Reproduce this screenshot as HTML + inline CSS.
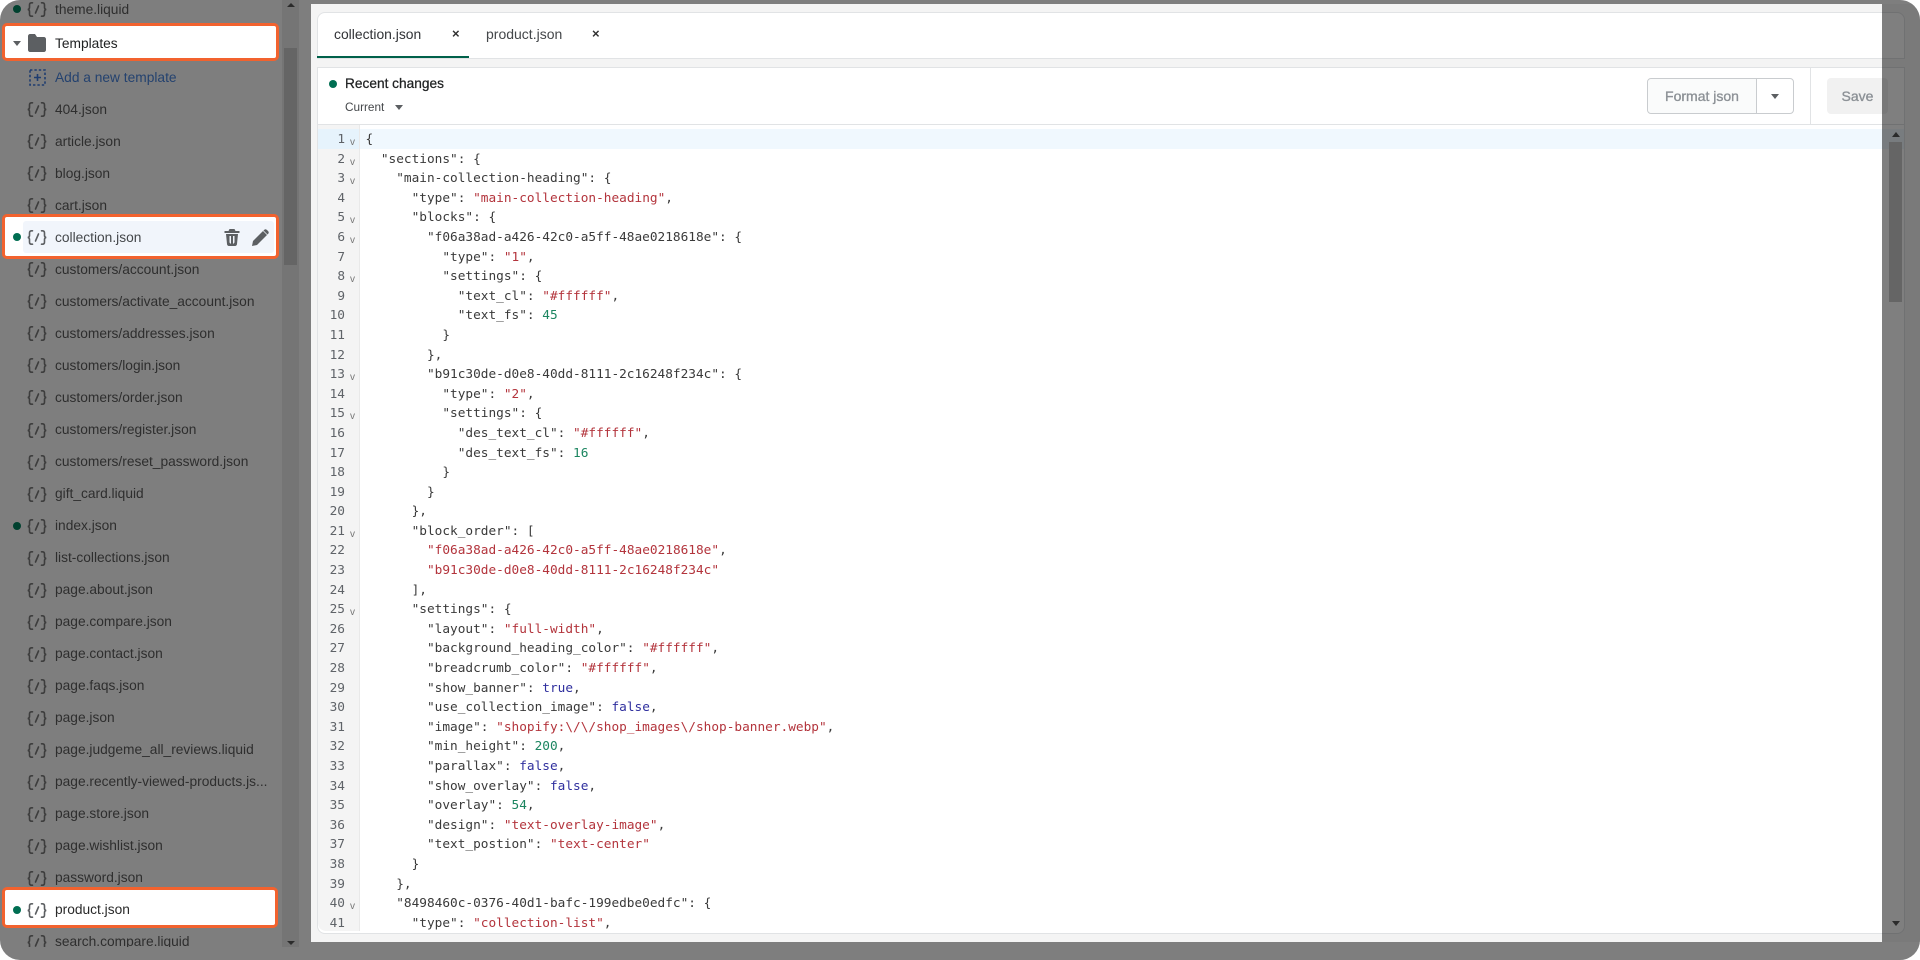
<!DOCTYPE html>
<html><head><meta charset="utf-8"><style>
html,body{margin:0;padding:0;background:#fff}
#w{position:relative;width:1920px;height:960px;overflow:hidden;border-radius:20px;background:#7e7e7e;font-family:"Liberation Sans",sans-serif}
#w div,#w pre,#w svg{position:absolute}
#side{left:0;top:0;width:282px;height:947px;overflow:hidden}
.r{left:55px;width:220px;height:32px;line-height:32px;font-size:13.75px;color:#2e2e2e;white-space:nowrap;margin-top:-15.5px}
.ic{left:27px;width:20px;height:15px;margin-top:-7.5px;fill:none;stroke:#3d3d3d;stroke-width:1.6;stroke-linecap:round}
.dot{left:13px;width:8px;height:8px;border-radius:50%;background:#00412f;margin-top:-4px}
.hl{left:2px;width:271px;background:#fff;border:3px solid #f2622e;border-radius:5px}
#panel{left:311px;top:4px;width:1609px;height:938px;background:#f4f4f4}
.card{background:#fff;border:1px solid #e1e3e5}
pre{margin:0;font-family:"DejaVu Sans Mono","Liberation Mono",monospace;font-size:12.77px;line-height:19.6px;color:#3a3a3a}
.s{color:#b3343c}.b{color:#2f2f9e}.n{color:#1c8560}
#dimr{left:1882px;top:4px;width:38px;height:938px;background:rgba(0,0,0,.5)}
</style></head><body><div id="w">

<div style="left:282px;top:0;width:17px;height:947px;background:#757575"></div>
<div style="left:284px;top:48px;width:13px;height:217px;background:#656565"></div>
<div style="left:287px;top:3px;width:0;height:0;border:4px solid transparent;border-bottom:4px solid #2b2b2b;border-top:0"></div>
<div style="left:287px;top:941px;width:0;height:0;border:4px solid transparent;border-top:4px solid #2b2b2b;border-bottom:0"></div>

<div id="side">
<div class="hl" style="top:23px;height:32px"></div>
<div class="hl" style="top:214px;height:39px"></div>
<div style="left:23px;top:221px;width:251px;height:32px;background:#f1f5fb;border-radius:3px"></div>
<div class="hl" style="top:887px;height:35px;width:270px"></div>

<div class="dot" style="top:9px"></div>
<svg class="ic" style="top:9px" viewBox="0 0 20 15"><path d="M5.5 .8H4.5C3 .8 2.5 1.6 2.5 3V5.5C2.5 6.5 1.8 7.3 .8 7.5 1.8 7.7 2.5 8.5 2.5 9.5V12C2.5 13.4 3 14.2 4.5 14.2H5.5M14.5 .8H15.5C17 .8 17.5 1.6 17.5 3V5.5C17.5 6.5 18.2 7.3 19.2 7.5 18.2 7.7 17.5 8.5 17.5 9.5V12C17.5 13.4 17 14.2 15.5 14.2H14.5M8.5 11L11.5 4"/></svg>
<div class="r" style="top:9px">theme.liquid</div>

<div style="left:13px;top:41px;width:0;height:0;border:4px solid transparent;border-top:5px solid #5c5f62;border-bottom:0"></div>
<svg style="left:28px;top:34px;width:18px;height:18px" viewBox="0 0 18 18"><path fill="#5c5f62" d="M0 2C0 1 1 0 2 0H7L9 3H16C17 3 18 4 18 5V16C18 17 17 18 16 18H2C1 18 0 17 0 16Z"/></svg>
<div class="r" style="top:43px;color:#202223;font-weight:400">Templates</div>

<svg style="left:29px;top:69px;width:17px;height:17px" viewBox="0 0 17 17"><rect x="1" y="1" width="15" height="15" fill="none" stroke="#1f3d70" stroke-width="1.6" stroke-dasharray="2.4 2"/><path d="M8.5 5v7M5 8.5h7" stroke="#1f3d70" stroke-width="1.6"/></svg>
<div class="r" style="top:77px;color:#24426f">Add a new template</div>

<svg width="0" height="0" style="left:0;top:0"><defs><symbol id="i" viewBox="0 0 20 15"><path d="M5.5 .8H4.5C3 .8 2.5 1.6 2.5 3V5.5C2.5 6.5 1.8 7.3 .8 7.5 1.8 7.7 2.5 8.5 2.5 9.5V12C2.5 13.4 3 14.2 4.5 14.2H5.5M14.5 .8H15.5C17 .8 17.5 1.6 17.5 3V5.5C17.5 6.5 18.2 7.3 19.2 7.5 18.2 7.7 17.5 8.5 17.5 9.5V12C17.5 13.4 17 14.2 15.5 14.2H14.5M8.5 11L11.5 4"/></symbol></defs></svg>

<svg class="ic" style="top:109px"><use href="#i"/></svg><div class="r" style="top:109px">404.json</div>
<svg class="ic" style="top:141px"><use href="#i"/></svg><div class="r" style="top:141px">article.json</div>
<svg class="ic" style="top:173px"><use href="#i"/></svg><div class="r" style="top:173px">blog.json</div>
<svg class="ic" style="top:205px"><use href="#i"/></svg><div class="r" style="top:205px">cart.json</div>

<div class="dot" style="top:237px;background:#006e52"></div>
<svg class="ic" style="top:237px;stroke:#5c5f62"><use href="#i"/></svg><div class="r" style="top:237px;color:#44474a">collection.json</div>
<svg style="left:224px;top:229px;width:16px;height:17px" viewBox="0 0 16 17"><path fill="#5c5f62" d="M5.5 0h5l1 2H15.500v2H.5V2H4.500zM2 5h12l-1 10c0 1-.8 2-2 2H5c-1.200 0-2-1-2-2zM5.500 7v6.500L7 15V7zM9 7v8l1.500-1.500V7z"/></svg>
<svg style="left:252px;top:229px;width:17px;height:17px" viewBox="0 0 17 17"><path fill="#5c5f62" d="M0 17l1-5L11 2l4 4L5 16zM12 1c1-1 2-1 3 0l1 1c1 1 1 2 0 3l-.500.5-4-4z"/></svg>

<svg class="ic" style="top:269px"><use href="#i"/></svg><div class="r" style="top:269px">customers/account.json</div>
<svg class="ic" style="top:301px"><use href="#i"/></svg><div class="r" style="top:301px">customers/activate_account.json</div>
<svg class="ic" style="top:333px"><use href="#i"/></svg><div class="r" style="top:333px">customers/addresses.json</div>
<svg class="ic" style="top:365px"><use href="#i"/></svg><div class="r" style="top:365px">customers/login.json</div>
<svg class="ic" style="top:397px"><use href="#i"/></svg><div class="r" style="top:397px">customers/order.json</div>
<svg class="ic" style="top:430px"><use href="#i"/></svg><div class="r" style="top:429.5px">customers/register.json</div>
<svg class="ic" style="top:462px"><use href="#i"/></svg><div class="r" style="top:461.5px">customers/reset_password.json</div>
<svg class="ic" style="top:494px"><use href="#i"/></svg><div class="r" style="top:493.5px">gift_card.liquid</div>
<div class="dot" style="top:526px"></div>
<svg class="ic" style="top:526px"><use href="#i"/></svg><div class="r" style="top:525.5px">index.json</div>
<svg class="ic" style="top:558px"><use href="#i"/></svg><div class="r" style="top:557.5px">list-collections.json</div>
<svg class="ic" style="top:590px"><use href="#i"/></svg><div class="r" style="top:589.5px">page.about.json</div>
<svg class="ic" style="top:622px"><use href="#i"/></svg><div class="r" style="top:621.5px">page.compare.json</div>
<svg class="ic" style="top:654px"><use href="#i"/></svg><div class="r" style="top:653.5px">page.contact.json</div>
<svg class="ic" style="top:686px"><use href="#i"/></svg><div class="r" style="top:685.5px">page.faqs.json</div>
<svg class="ic" style="top:718px"><use href="#i"/></svg><div class="r" style="top:717.5px">page.json</div>
<svg class="ic" style="top:750px"><use href="#i"/></svg><div class="r" style="top:749.5px">page.judgeme_all_reviews.liquid</div>
<svg class="ic" style="top:782px"><use href="#i"/></svg><div class="r" style="top:781.5px">page.recently-viewed-products.js...</div>
<svg class="ic" style="top:814px"><use href="#i"/></svg><div class="r" style="top:813.5px">page.store.json</div>
<svg class="ic" style="top:846px"><use href="#i"/></svg><div class="r" style="top:845.5px">page.wishlist.json</div>
<svg class="ic" style="top:878px"><use href="#i"/></svg><div class="r" style="top:877.5px">password.json</div>
<div class="dot" style="top:910px;background:#006e52"></div>
<svg class="ic" style="top:910px;stroke:#5c5f62"><use href="#i"/></svg><div class="r" style="top:909.5px;color:#2a2a2a">product.json</div>
<svg class="ic" style="top:942px"><use href="#i"/></svg><div class="r" style="top:941.5px">search.compare.liquid</div>
</div>

<div id="panel"></div>

<!-- tabs card -->
<div class="card" style="left:317px;top:12px;width:1586px;height:45px;border-radius:8px 8px 0 0"></div>
<div style="left:317px;top:56px;width:152px;height:2px;background:#00614a"></div>
<div style="left:334px;top:24px;height:20px;line-height:20px;font-size:13.9px;color:#303236">collection.json</div>
<div style="left:452px;top:24px;height:20px;line-height:20px;font-size:13px;font-weight:700;color:#303030">×</div>
<div style="left:486px;top:24px;height:20px;line-height:20px;font-size:14px;color:#44474a">product.json</div>
<div style="left:592px;top:24px;height:20px;line-height:20px;font-size:13px;font-weight:700;color:#303030">×</div>

<!-- editor card -->
<div class="card" style="left:317px;top:67px;width:1586px;height:865px;border-radius:0 0 8px 8px;overflow:hidden"></div>
<div style="left:318px;top:124px;width:1586px;height:1px;background:#e1e3e5"></div>
<div style="left:329px;top:80px;width:8px;height:8px;border-radius:50%;background:#006e52"></div>
<div style="left:345px;top:74px;height:20px;line-height:20px;font-size:13.7px;color:#202223;-webkit-text-stroke:.25px #202223">Recent changes</div>
<div style="left:345px;top:98px;height:18px;line-height:18px;font-size:11.8px;color:#44474a">Current</div>
<div style="left:395px;top:105px;width:0;height:0;border:4.500px solid transparent;border-top:5px solid #5c5f62;border-bottom:0"></div>

<div style="left:1647px;top:78px;width:145px;height:34px;border:1px solid #c9cccf;border-radius:4px;background:#fff"></div>
<div style="left:1648px;top:79px;width:108px;height:34px;background:#fafbfb;border-right:1px solid #c9cccf;border-radius:4px 0 0 4px"></div>
<div style="left:1648px;top:79px;width:108px;height:34px;line-height:35px;text-align:center;font-size:14px;color:#8c9196;-webkit-text-stroke:.35px #8c9196">Format json</div>
<div style="left:1771px;top:94px;width:0;height:0;border:4.500px solid transparent;border-top:5px solid #5c5f62;border-bottom:0"></div>
<div style="left:1810px;top:68px;width:1px;height:56px;background:#e1e3e5"></div>
<div style="left:1827px;top:78px;width:61px;height:36px;border-radius:4px;background:#f1f1f1;line-height:37px;text-align:center;font-size:14px;color:#8c9196;-webkit-text-stroke:.35px #8c9196">Save</div>

<!-- gutter -->
<div style="left:318px;top:125px;width:41px;height:806px;background:#f4f4f4;border-right:1px solid #e9e9e9;border-radius:0 0 0 8px"></div>
<div style="left:318px;top:129px;width:41px;height:20px;background:#e6f3fc"></div>
<div style="left:360px;top:129px;width:1544px;height:20px;background:#f0f8fe"></div>

<pre style="left:305px;top:130px;width:40px;height:802px;overflow:hidden;text-align:right;color:#5f6368">1
2
3
4
5
6
7
8
9
10
11
12
13
14
15
16
17
18
19
20
21
22
23
24
25
26
27
28
29
30
31
32
33
34
35
36
37
38
39
40
41</pre>
<pre style="left:350px;top:133px;width:10px;height:798px;overflow:hidden;font:10px/19.6px 'Liberation Sans',sans-serif;color:#777">v
v
v

v
v

v




v

v





v



v














v</pre>

<pre style="left:365.500px;top:130px;width:1500px;height:801px;overflow:hidden">{
  "sections": {
    "main-collection-heading": {
      "type": <span class="s">"main-collection-heading"</span>,
      "blocks": {
        "f06a38ad-a426-42c0-a5ff-48ae0218618e": {
          "type": <span class="s">"1"</span>,
          "settings": {
            "text_cl": <span class="s">"#ffffff"</span>,
            "text_fs": <span class="n">45</span>
          }
        },
        "b91c30de-d0e8-40dd-8111-2c16248f234c": {
          "type": <span class="s">"2"</span>,
          "settings": {
            "des_text_cl": <span class="s">"#ffffff"</span>,
            "des_text_fs": <span class="n">16</span>
          }
        }
      },
      "block_order": [
        <span class="s">"f06a38ad-a426-42c0-a5ff-48ae0218618e"</span>,
        <span class="s">"b91c30de-d0e8-40dd-8111-2c16248f234c"</span>
      ],
      "settings": {
        "layout": <span class="s">"full-width"</span>,
        "background_heading_color": <span class="s">"#ffffff"</span>,
        "breadcrumb_color": <span class="s">"#ffffff"</span>,
        "show_banner": <span class="b">true</span>,
        "use_collection_image": <span class="b">false</span>,
        "image": <span class="s">"shopify:\/\/shop_images\/shop-banner.webp"</span>,
        "min_height": <span class="n">200</span>,
        "parallax": <span class="b">false</span>,
        "show_overlay": <span class="b">false</span>,
        "overlay": <span class="n">54</span>,
        "design": <span class="s">"text-overlay-image"</span>,
        "text_postion": <span class="s">"text-center"</span>
      }
    },
    "8498460c-0376-40d1-bafc-199edbe0edfc": {
      "type": <span class="s">"collection-list"</span>,</pre>

<!-- right dim -->
<div id="dimr"></div>
<div style="left:1889px;top:142px;width:13px;height:160px;background:#656565"></div>
<div style="left:1892px;top:132px;width:0;height:0;border:4px solid transparent;border-bottom:5px solid #2b2b2b;border-top:0"></div>
<div style="left:1892px;top:921px;width:0;height:0;border:4px solid transparent;border-top:5px solid #2b2b2b;border-bottom:0"></div>
</div></body></html>
